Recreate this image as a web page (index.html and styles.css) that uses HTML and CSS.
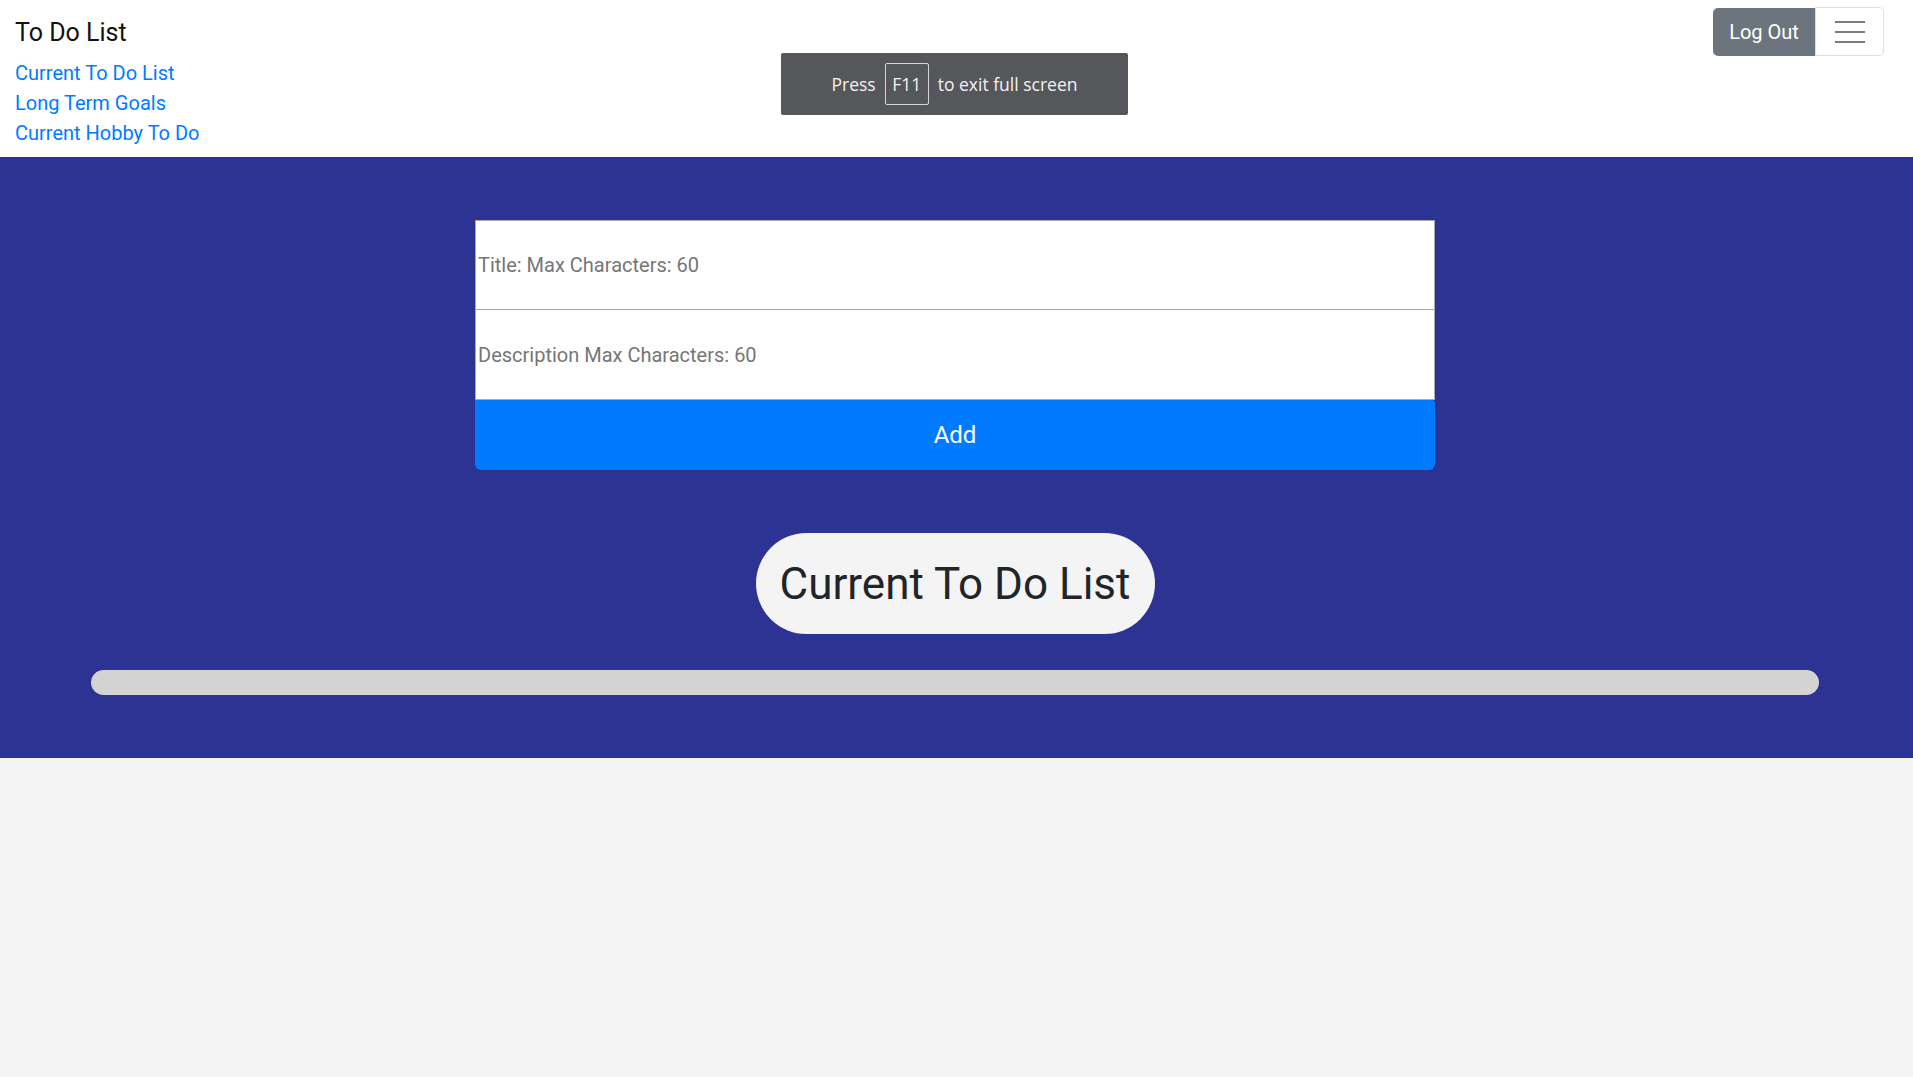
FILE: index.html
```html
<!DOCTYPE html>
<html lang="en">
<head>
<meta charset="utf-8">
<title>To Do List</title>
<link rel="stylesheet" href="styles.css">
</head>
<body>
<header class="navbar">
  <div class="brand-col">
    <div class="brand">To Do List</div>
    <nav class="links">
      <a href="#">Current To Do List</a>
      <a href="#">Long Term Goals</a>
      <a href="#">Current Hobby To Do</a>
    </nav>
  </div>
  <div class="actions">
    <button class="btn-logout">Log Out</button>
    <button class="btn-toggle" aria-label="menu">
      <span class="bar-line"></span>
      <span class="bar-line"></span>
      <span class="bar-line"></span>
    </button>
  </div>
</header>

<div class="fs-toast">Press <span class="key">F11</span> to exit full screen</div>

<main class="hero">
  <form class="todo-form">
    <input class="field" type="text" placeholder="Title: Max Characters: 60">
    <input class="field field-desc" type="text" placeholder="Description Max Characters: 60">
    <button class="btn-add" type="button">Add</button>
  </form>
  <h1 class="pill">Current To Do List</h1>
  <div class="progress"></div>
</main>
</body>
</html>
```

FILE: styles.css
```css
* { box-sizing: border-box; }
html, body { margin: 0; padding: 0; }
body {
  font-family: Roboto, "Liberation Sans", sans-serif;
  background: #f4f4f4;
  color: #212529;
  min-height: 1077px;
}

.navbar {
  background: #ffffff;
  height: 157px;
  display: flex;
  justify-content: space-between;
  align-items: flex-start;
  padding: 0 29px 0 15px;
}
.brand-col {
  display: flex;
  flex-direction: column;
  padding-top: 15px;
}
.brand {
  font-size: 25px;
  line-height: 36px;
  color: #111;
}
.links {
  display: flex;
  flex-direction: column;
  margin-top: 7px;
}
.links a {
  font-size: 20px;
  line-height: 30px;
  color: #007bff;
  text-decoration: none;
}

.actions {
  display: flex;
  align-items: stretch;
  margin-top: 8px;
  height: 49px;
}
.btn-logout {
  font-family: Roboto, "Liberation Sans", sans-serif;
  font-size: 20px;
  color: #fff;
  background: #6c757d;
  border: none;
  border-radius: 5px 0 0 5px;
  width: 102px;
  height: 48px;
  padding: 0;
}
.btn-toggle {
  width: 69px;
  height: 49px;
  margin-top: -1px;
  background: #fff;
  border: 1px solid #dedede;
  border-radius: 0 5px 5px 0;
  display: flex;
  flex-direction: column;
  align-items: center;
  justify-content: center;
  gap: 8px;
  padding: 0;
}
.bar-line {
  display: block;
  width: 30px;
  height: 2px;
  background: #7d7d7d;
}

.fs-toast {
  position: fixed;
  top: 53px;
  left: 781px;
  width: 347px;
  height: 62px;
  background: #55575b;
  border-radius: 2px;
  color: #f2f2f2;
  font-family: "Open Sans", "Noto Sans", sans-serif;
  font-size: 17.5px;
  display: flex;
  align-items: center;
  justify-content: center;
  gap: 9px;
}
.fs-toast .key {
  display: inline-flex;
  align-items: center;
  justify-content: center;
  width: 44px;
  height: 42px;
  border: 1px solid #d6d6d6;
  border-radius: 2px;
}

.hero {
  background: #2d3393;
  padding: 63px 3px 63px 0;
  display: flex;
  flex-direction: column;
  align-items: center;
}
.todo-form {
  width: 960px;
  display: flex;
  flex-direction: column;
}
.field {
  height: 90px;
  border: 1px solid #a9a9a9;
  background: #fff;
  font-family: Roboto, "Liberation Sans", sans-serif;
  font-size: 20px;
  padding: 0 2px;
  color: #333;
  outline: none;
}
.field::placeholder { color: #767676; }
.field-desc { margin-top: -1px; height: 91px; }
.btn-add {
  height: 70px;
  background: #007bff;
  color: #fff;
  border: none;
  border-radius: 0 3px 6px 6px;
  font-family: Roboto, "Liberation Sans", sans-serif;
  font-size: 24px;
}

.pill {
  margin: 63px 0 0;
  height: 101px;
  padding: 0 27px;
  border-radius: 51px;
  background: #f4f4f4;
  color: #212529;
  font-weight: 400;
  font-size: 44px;
  display: flex;
  align-items: center;
  justify-content: center;
  width: 399px;
  white-space: nowrap;
}
.progress {
  margin-top: 36px;
  width: 1728px;
  height: 25px;
  border-radius: 13px;
  background: #d3d3d3;
}
```
